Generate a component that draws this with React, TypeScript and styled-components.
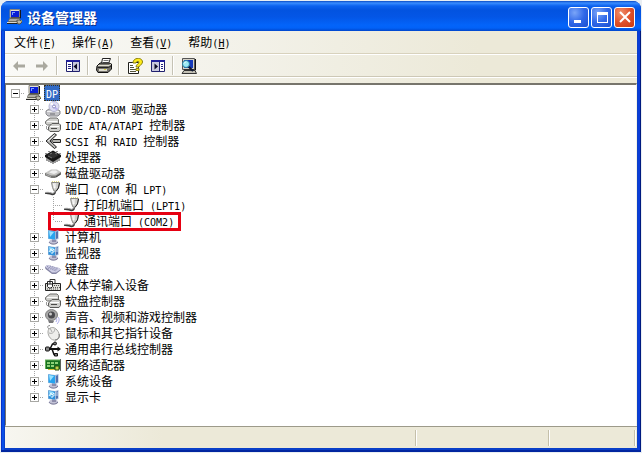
import React, { useState } from "react";
import styled, { createGlobalStyle, css } from "styled-components";

const GlobalStyle = createGlobalStyle`
  * { box-sizing: border-box; }
  html, body, #root { height: 100%; margin: 0; }
  body { background: #e9eef2; overflow: hidden; }
  button { font: inherit; color: inherit; border: 0; padding: 0; background: none; }
`;

const Page = styled.div`
  height: 100%;
  padding: 1px;
  font-family: "Noto Sans CJK SC", sans-serif;
  font-size: 12px;
  color: #000;
`;

const Window = styled.main`
  height: 100%;
  display: flex;
  flex-direction: column;
  padding: 0 4px 4px;
  border-radius: 8px 8px 0 0;
  background: linear-gradient(90deg, #0831c8 0 1px, #0a4fe8 1px 3px, #0a3fc8 3px calc(100% - 3px), #0a3cd8 calc(100% - 3px) calc(100% - 1px), #001a80 calc(100% - 1px));
  box-shadow: inset 0 -2px 0 #0126a0;
`;

const TitleBar = styled.header`
  height: 30px;
  flex: none;
  margin: 0 -4px;
  padding: 2px 6px 0;
  display: flex;
  align-items: center;
  gap: 4px;
  border-radius: 8px 8px 0 0;
  background: linear-gradient(180deg, #0a4bc4 0, #3a8dff 2px, #0c62ee 5px, #0353e0 9px, #0456e6 16px, #0364fa 24px, #0262f8 27px, #0046cc 30px);
`;

const Title = styled.h1`
  flex: 1;
  margin: 0;
  font-size: 14px;
  line-height: 20px;
  font-weight: 700;
  color: #fff;
  text-shadow: 1px 1px 0 #0a318c;
`;

const Captions = styled.div`
  display: flex;
  gap: 2px;
`;

const CaptionButton = styled.button<{ $close?: boolean }>`
  width: 21px;
  height: 21px;
  display: grid;
  place-items: center;
  border: 1px solid #fff;
  border-radius: 3px;
  background: ${(p) =>
    p.$close
      ? "radial-gradient(circle at 30% 25%, #f0906c, #e0512c 50%, #c8390f)"
      : "radial-gradient(circle at 30% 25%, #7aa5f8, #3068e8 50%, #1a4fd0)"};
`;

const bar = css`
  flex: none;
  display: flex;
  background: linear-gradient(90deg, #fafaf7 0, #f3f2ea 35%, #ece9d8 75%);
`;

const MenuBar = styled.nav`
  ${bar}
  height: 23px;
  padding-left: 1px;
  border-bottom: 1px solid #d8d2bd;
`;

const MenuItem = styled.button`
  padding: 0 8px;
  line-height: 22px;
`;

const ToolBar = styled.div`
  ${bar}
  height: 23px;
  padding-left: 2px;
  border-top: 1px solid #fff;
  border-bottom: 1px solid #cdc8b6;
`;

const ToolButton = styled.button`
  width: 23px;
  height: 22px;
  display: grid;
  place-items: center;
`;

const ToolDivider = styled.span`
  width: 2px;
  margin: 1px 3px;
  border-left: 1px solid #c5c2b4;
  border-right: 1px solid #fff;
`;

const Spacer = styled.div`
  ${bar}
  height: 6px;
  border-top: 1px solid #fff;
`;

const Tree = styled.div`
  flex: 1;
  min-height: 0;
  overflow: hidden;
  border: 1px solid #77756c;
  border-top-width: 2px;
  border-right-color: #f4f2e8;
  border-bottom-color: #fff;
  background: #fff;
`;

const Row = styled.div`
  position: relative;
  width: fit-content;
  height: 16px;
  display: flex;
  align-items: center;
`;

type Line = "none" | "full" | "up" | "pass";

const vertical = "repeating-linear-gradient(180deg, #a5a5a5 0 1px, transparent 1px 2px)";
const horizontal = "repeating-linear-gradient(90deg, transparent 0 1px, #a5a5a5 1px 2px)";

const Guide = styled.span<{ $line: Line }>`
  flex: none;
  width: 19px;
  height: 16px;
  display: grid;
  place-items: center;
  background-repeat: no-repeat;
  ${(p) =>
    p.$line === "none" &&
    css`background-image: ${horizontal}; background-size: 9px 1px; background-position: 10px 8px;`}
  ${(p) =>
    p.$line === "full" &&
    css`background-image: ${vertical}, ${horizontal}; background-size: 1px 16px, 9px 1px; background-position: 9px 0, 10px 8px;`}
  ${(p) =>
    p.$line === "up" &&
    css`background-image: ${vertical}, ${horizontal}; background-size: 1px 8px, 9px 1px; background-position: 9px 0, 10px 8px;`}
  ${(p) =>
    p.$line === "pass" &&
    css`background-image: ${vertical}; background-size: 1px 16px; background-position: 9px 0;`}
`;

const Indent = styled.span`
  width: 19px;
  flex: none;
`;

const Toggle = styled.button`
  width: 9px;
  height: 9px;
  margin-top: 1px;
  display: block;
  border: 1px solid #a8a8a4;
  background: #fff;
  svg { display: block; }
`;

const IconSlot = styled.span`
  width: 16px;
  height: 16px;
  margin: 0 2px 0 1px;
  flex: none;
  svg { display: block; }
`;

const ItemLabel = styled.span<{ $selected?: boolean }>`
  padding: 0 2px;
  height: 16px;
  line-height: 16px;
  white-space: pre;
  ${(p) =>
    p.$selected &&
    css`
      color: #fff;
      background: #316ac5;
      outline: 1px dotted #3a3420;
      outline-offset: -1px;
    `}
`;

const Latin = styled.span`
  font-family: "DejaVu Sans Mono", monospace;
  font-size: 10px;
  white-space: pre;
`;

const Marker = styled.span`
  position: absolute;
  inset: -1px -5px -2px 42px;
  border: 3px solid #e60012;
  pointer-events: none;
`;

const StatusBar = styled.footer`
  ${bar}
  height: 22px;
  padding: 3px 2px 2px 0;
  border-top: 1px solid #9d9a8a;
  background: linear-gradient(90deg, #f7f6f0 0, #ece9d8 25%);
`;

const StatusCell = styled.div<{ $width?: number }>`
  flex: ${(p) => (p.$width ? `0 0 ${p.$width}px` : "1")};
  border-right: 1px solid #c5c0aa;
  box-shadow: 1px 0 0 #fff;
`;

function Mixed({ text }: { text: string }) {
  const parts = text.split(/([\x20-\x7e]+)/).filter(Boolean);
  return (
    <>
      {parts.map((part, i) =>
        /^[\x20-\x7e]/.test(part) ? <Latin key={i}>{part}</Latin> : <React.Fragment key={i}>{part}</React.Fragment>
      )}
    </>
  );
}

const Svg = ({ children, size = 16 }: { children: React.ReactNode; size?: number }) => (
  <svg width={size} height={size} viewBox="0 0 16 16" fill="none" aria-hidden="true">
    {children}
  </svg>
);

const PcIcon = () => (
  <Svg>
    <path d="M3 .5h9.500v8H3z" fill="#e4e1d6" stroke="#8a887e" />
    <path d="M4 2h8v6H4z" fill="#0a1fd6" />
    <path d="M5 3h3v1H6v2H5z" fill="#7fa0ff" />
    <path d="M13.500 1v8H4" stroke="#15151a" />
    <path d="M2.500 9.500h10l1 3h-12z" fill="#d8d6cc" stroke="#6a685e" />
    <path d="M3 11h7" stroke="#85827a" />
    <path d="M0 14.500h11" stroke="#222" />
    <path d="M0 13.500h11" stroke="#d9d7cc" />
    <path d="M10 11h3l2 2-2 2h-2l-1-2z" fill="#bbb8aa" stroke="#55534a" />
    <path d="M14 12h1" stroke="#e7d44a" />
  </Svg>
);

const DiscIcon = () => (
  <Svg>
    <path d="M1 10l3-2h8l3 2v3l-2 2H3l-2-2z" fill="#c4c4c8" stroke="#88888d" />
    <path d="M2 10.500h12" stroke="#f1f1f3" />
    <circle cx="9" cy="5.500" r="5" fill="#dcdcf3" stroke="#b4b4cf" />
    <path d="M9 5.500L5 3l2-2z" fill="#fff" />
    <path d="M9 5.500l4 2-2 2z" fill="#b7b0ee" />
    <circle cx="9" cy="5.500" r="1.500" fill="#fff" stroke="#8586c0" />
    <path d="M5 13h5" stroke="#6b6b70" />
  </Svg>
);

const DriveStackIcon = () => (
  <Svg>
    <path d="M3 2.500l2-1.500h7l1.500 1.500v4L12 8H2.500L.5 6.500v-2z" fill="#cfcfcc" stroke="#6e6e6c" />
    <path d="M2 4.500h10.500" stroke="#fafafa" />
    <path d="M5 8.500L7 6.500h7l1.500 1.500v4.500L14 14.500H5L3.500 13v-3z" fill="#cfcfcc" stroke="#5a5a58" />
    <path d="M5 9.500h9" stroke="#fff" />
    <path d="M6 11.500h6" stroke="#4a4a48" />
    <path d="M1.500 9v3l2 1" stroke="#999" />
  </Svg>
);

const ScsiIcon = () => (
  <Svg>
    <path d="M9.500 .5L1 8l8.500 7.500 2-1.500L5 8l6.500-6z" fill="#b9b9b6" stroke="#222" />
    <path d="M3 8l6-6" stroke="#eee" />
    <path d="M8 6.500h7.500v3H8L6.500 8z" fill="#b4b4b0" stroke="#222" />
  </Svg>
);

const ChipIcon = () => (
  <Svg>
    <path d="M2 8v4M4 9v4M6 10v4M8 11v4M10 10v4M12 9v4M14 8v4" stroke="#3a3a3a" />
    <path d="M0 6l8-4.500L16 6v2l-8 5-8-5z" fill="#171717" />
    <path d="M2 6l6-3 6 3-6 3.500z" fill="#303030" />
    <path d="M5 5l2-1M10 4l2 1M3 7l4 2" stroke="#777" />
    <path d="M1 4v1M4 2v1M12 2v1M15 4v1" stroke="#222" />
  </Svg>
);

const DiskIcon = () => (
  <Svg>
    <path d="M0 8v2.500L6.500 13H10l6-3.500V7z" fill="#777774" />
    <path d="M0 8l6-3.500h6L16 7l-5.500 3.500H6z" fill="#c6c6c4" />
    <path d="M4 7.500l3-2h4l2 1.500-4 2z" fill="#efefef" />
    <path d="M11 12l4.500-3" stroke="#444" />
    <path d="M1 9.500l5 2" stroke="#aaa" />
  </Svg>
);

const PortIcon = () => (
  <Svg>
    <path d="M7 .5h8" stroke="#e3df83" strokeDasharray="1 1" />
    <path d="M6.500 1.500h8l-1 5L11 10H9L7.500 6.500z" fill="#cfcfcb" stroke="#8c8c88" />
    <path d="M8.500 2.500l1 5M10 2v5" stroke="#fff" />
    <path d="M14.500 2l-1 5L11 10.500" stroke="#222" />
    <path d="M10 10.500c0 2.500-1.500 3-3.500 2.500S3 11.500 0 12" stroke="#3c3c3c" strokeWidth="2" />
    <path d="M9.500 10c0 2.500-1.500 2.500-3 2S3 11 0 11.500" stroke="#aaa" />
  </Svg>
);

const ScreenIcon = ({ graph }: { graph?: boolean }) => (
  <Svg>
    <ellipse cx="8.500" cy="13" rx="4.500" ry="2.500" fill="#c2c2d6" />
    <path d="M4 13c1 2.500 7 3 9 0" stroke="#777795" />
    <path d="M7 10h4v3H7z" fill="#8d8dab" />
    <path d="M3 1l7 1 3.500-1v9L10 11 3 10z" fill="#9fb8d8" />
    <path d="M3.500 1.500L10 2.500v8l-6.500-1z" fill={graph ? "#2d91dc" : "#27a4ef"} />
    <path d="M4 2l5 1-4 5z" fill="#99e1ff" />
    <path d="M11 3l2-1v7l-2 1z" fill="#5372ae" />
    {graph && <path d="M4 7l2-3 1 2 2-2v3H7v2" stroke="#e8faff" />}
    {graph && <path d="M10 4h3M10 6h3" stroke="#c8dcf0" />}
  </Svg>
);

const KeyboardIcon = () => (
  <Svg>
    <path d="M0 6l2-2 12 3 2 2-5 4H7L.5 8z" fill="#8585a4" />
    <path d="M0 5.500L2 4l12 3 1.500 1.500L11 11.500H7z" fill="#d0d0e6" />
    <path d="M2 5.500l10 3.500M3 7l8 3M5 5l8 3" stroke="#8080a8" strokeDasharray="1 1" />
  </Svg>
);

const HidIcon = () => (
  <Svg>
    <path d="M.5 6.500h15v7H.5z" fill="#deded8" stroke="#222" />
    <path d="M9 8.500h6M8 10.500h7M2 12h12" stroke="#555" strokeDasharray="1 1" />
    <path d="M5 4V2.500h5V6" stroke="#333" />
    <path d="M2.500 4.500h5v5L6 11H4L2.500 9.500z" fill="#fff" stroke="#222" />
    <path d="M3 7h4M5 4v3" stroke="#222" />
  </Svg>
);

const SpeakerIcon = () => (
  <Svg>
    <ellipse cx="6.500" cy="6" rx="6" ry="5.500" fill="#a8a8a8" stroke="#808080" />
    <circle cx="6.500" cy="6" r="3.500" fill="#4a4a4e" />
    <circle cx="5.500" cy="5" r="1.500" fill="#cacaca" />
    <path d="M3 11l6 1-1 2H4z" fill="#77777a" />
    <path d="M11 9c1 1 1 2 0 4M13 8c2 2 1 5-1 7" stroke="#a8a8ec" />
  </Svg>
);

const MouseIcon = () => (
  <Svg>
    <path d="M4 4C2 2 2 1 5 .5" stroke="#888" />
    <path d="M3 7c0-5 6-6 9-2 3.500 4 3 9-1 10-5 1-8-4-8-8z" fill="#eeeeec" stroke="#a5a5a2" />
    <path d="M4 8c3 1 5 0 6-4M7 7L5 3" stroke="#aaa" />
    <path d="M14 9c1 3-1 6-4 6" stroke="#777" />
  </Svg>
);

const UsbIcon = () => (
  <Svg>
    <path d="M1 8h13" stroke="#111" strokeWidth="2" />
    <rect x=".5" y="6" width="4" height="4" rx="1" fill="#888" stroke="#111" />
    <path d="M12.500 5.500L16 8l-3.500 2.500z" fill="#111" />
    <path d="M5 8l2.500-5H10M7 8l2 5.500h2" stroke="#111" strokeWidth="1.500" />
    <circle cx="10" cy="2.500" r="1.500" fill="#777" stroke="#111" />
    <path d="M9.500 12.500h3v2.500h-3z" fill="#777" stroke="#111" />
  </Svg>
);

const NetIcon = () => (
  <Svg>
    <path d="M0 3h15v9H0z" fill="#167020" />
    <path d="M0 3h15M.5 3v9" stroke="#65ac57" />
    <path d="M2 5h3v2H2zM2 8h3v2H2zM6 5h3v2H6zM6 8h3v2H6zM10 5h3v2h-3z" fill="#8ed178" />
    <path d="M3 12.500h9" stroke="#d9bd32" />
    <path d="M10 9h4v4h-4z" fill="#bcd349" stroke="#284d14" />
    <path d="M15.500 2v12" stroke="#5c625b" />
  </Svg>
);

const Arrow = ({ flip }: { flip?: boolean }) => (
  <Svg>
    <path d={flip ? "M14 8L9 3v3.500H2v3h7V13z" : "M2 8l5-5v3.500h7v3H7V13z"} fill="#aaa99f" />
  </Svg>
);

const PaneIcon = ({ right }: { right?: boolean }) => (
  <Svg>
    <path d="M1.500 2.500h13v11h-13z" fill="#fff" stroke="#20206e" />
    <path d="M1 3h14" stroke="#20209a" strokeWidth="2" />
    <path d={right ? "M9.500 4v9" : "M7.500 4v9"} stroke="#20206e" />
    <path d={right ? "M2 4h7v9H2z" : "M8 4h6v9H8z"} fill="#c9c9dc" />
    <path d={right ? "M11 6.500h2M11 8.500h2M11 10.500h2" : "M3 6.500h3M3 8.500h3M3 10.500h3"} stroke="#222280" />
    <path d={right ? "M4.500 5.500v6L8 8.500z" : "M12 5.500v6L8.500 8.500z"} fill="#0a0a25" />
  </Svg>
);

const PrinterIcon = () => (
  <Svg>
    <path d="M5.500 5.500l1-5h8l-2 5z" fill="#fff" stroke="#222" />
    <path d="M7.500 2.500h5M7 4.500h5" stroke="#777" />
    <path d="M1 8l3-3h9l2.500 1v5L12 14.500H2L.5 12z" fill="#77756e" stroke="#111" />
    <path d="M2 7.500h11L15 6" stroke="#e1dfd3" />
    <path d="M1.500 9.500h11L15 8" stroke="#222" />
    <path d="M3 12h8" stroke="#dddbd0" strokeWidth="2" />
    <path d="M8 11.500h2" stroke="#dcd441" />
  </Svg>
);

const HelpIcon = () => (
  <Svg>
    <path d="M1.500 4.500h10v11h-10z" fill="#fff" stroke="#20201c" />
    <path d="M3 7.500h3M3 9.500h4M3 11.500h6M3 13.500h6" stroke="#54543c" />
    <path d="M6 5c0-6 9.500-6 9.500-1 0 3-3.500 3-3.500 5H9c0-3 3-3 3-5 0-1-3-1-3 1z" fill="#ffec18" stroke="#8a8010" />
    <path d="M9 10.500h3v2H9z" fill="#ffec18" stroke="#8a8010" />
  </Svg>
);

const ScanIcon = () => (
  <Svg>
    <path d="M1.500 .5h12v11h-12z" fill="#d4d2c8" stroke="#555" />
    <path d="M3 2h9v8H3z" fill="#1539ba" />
    <path d="M14.500 1v11H3" stroke="#111" />
    <path d="M1 15.500l2-3h11l1.500 3z" fill="#c3c1b5" stroke="#333" />
    <path d="M7 8l5 5" stroke="#101735" strokeWidth="2" />
    <circle cx="5" cy="6" r="3.500" fill="#9cebf5" stroke="#247da0" />
    <path d="M3 5.500l2-2" stroke="#fff" />
  </Svg>
);

type Device = { label: string; icon: React.ReactNode; children?: Device[]; marked?: boolean };

const devices: Device[] = [
  { label: "DVD/CD-ROM 驱动器", icon: <DiscIcon /> },
  { label: "IDE ATA/ATAPI 控制器", icon: <DriveStackIcon /> },
  { label: "SCSI 和 RAID 控制器", icon: <ScsiIcon /> },
  { label: "处理器", icon: <ChipIcon /> },
  { label: "磁盘驱动器", icon: <DiskIcon /> },
  {
    label: "端口 (COM 和 LPT)",
    icon: <PortIcon />,
    children: [
      { label: "打印机端口 (LPT1)", icon: <PortIcon /> },
      { label: "通讯端口 (COM2)", icon: <PortIcon />, marked: true },
    ],
  },
  { label: "计算机", icon: <ScreenIcon /> },
  { label: "监视器", icon: <ScreenIcon graph /> },
  { label: "键盘", icon: <KeyboardIcon /> },
  { label: "人体学输入设备", icon: <HidIcon /> },
  { label: "软盘控制器", icon: <DriveStackIcon /> },
  { label: "声音、视频和游戏控制器", icon: <SpeakerIcon /> },
  { label: "鼠标和其它指针设备", icon: <MouseIcon /> },
  { label: "通用串行总线控制器", icon: <UsbIcon /> },
  { label: "网络适配器", icon: <NetIcon /> },
  { label: "系统设备", icon: <ScreenIcon /> },
  { label: "显示卡", icon: <ScreenIcon graph /> },
];

const Expander = ({ open, label, onClick }: { open: boolean; label: string; onClick: () => void }) => (
  <Toggle type="button" aria-label={label} aria-expanded={open} onClick={onClick}>
    <svg width="7" height="7" viewBox="0 0 7 7" shapeRendering="crispEdges" aria-hidden="true">
      <path d={open ? "M1 3h5v1H1z" : "M1 3h2V1h1v2h2v1H4v2H3V4H1z"} fill="#000" />
    </svg>
  </Toggle>
);

const menus = [
  ["文件", "F"],
  ["操作", "A"],
  ["查看", "V"],
  ["帮助", "H"],
];

export default function App() {
  const [rootOpen, setRootOpen] = useState(true);
  const [open, setOpen] = useState<string[]>(["端口 (COM 和 LPT)"]);
  const toggle = (label: string) =>
    setOpen((list) => (list.includes(label) ? list.filter((l) => l !== label) : [...list, label]));

  return (
    <Page>
      <GlobalStyle />
      <Window>
        <TitleBar>
          <PcIcon />
          <Title>设备管理器</Title>
          <Captions>
            <CaptionButton aria-label="最小化">
              <Svg><path d="M3 11h7v3H3z" fill="#fff" /></Svg>
            </CaptionButton>
            <CaptionButton aria-label="最大化">
              <Svg><path d="M3 3h11v11H3zM4 6v7h9V6z" fill="#fff" fillRule="evenodd" /></Svg>
            </CaptionButton>
            <CaptionButton aria-label="关闭" $close>
              <Svg><path d="M3 3l10 10M13 3L3 13" stroke="#fff" strokeWidth="2" /></Svg>
            </CaptionButton>
          </Captions>
        </TitleBar>
        <MenuBar>
          {menus.map(([name, key]) => (
            <MenuItem key={key} type="button">
              {name}
              <Latin>(<u>{key}</u>)</Latin>
            </MenuItem>
          ))}
        </MenuBar>
        <ToolBar role="toolbar">
          <ToolButton aria-label="后退" disabled><Arrow /></ToolButton>
          <ToolButton aria-label="前进" disabled><Arrow flip /></ToolButton>
          <ToolDivider />
          <ToolButton aria-label="显示树"><PaneIcon /></ToolButton>
          <ToolDivider />
          <ToolButton aria-label="打印"><PrinterIcon /></ToolButton>
          <ToolDivider />
          <ToolButton aria-label="属性"><HelpIcon /></ToolButton>
          <ToolButton aria-label="操作窗格"><PaneIcon right /></ToolButton>
          <ToolDivider />
          <ToolButton aria-label="扫描硬件"><ScanIcon /></ToolButton>
        </ToolBar>
        <Spacer />
        <Tree role="tree">
          <Row role="treeitem" aria-expanded={rootOpen}>
            <Guide $line="none">
              <Expander open={rootOpen} label="DP" onClick={() => setRootOpen(!rootOpen)} />
            </Guide>
            <IconSlot><PcIcon /></IconSlot>
            <ItemLabel $selected><Mixed text="DP" /></ItemLabel>
          </Row>
          {rootOpen &&
            devices.map((device, i) => {
              const last = i === devices.length - 1;
              const expanded = open.includes(device.label);
              return (
                <React.Fragment key={device.label}>
                  <Row role="treeitem">
                    <Indent />
                    <Guide $line={last ? "up" : "full"}>
                      <Expander open={expanded} label={device.label} onClick={() => toggle(device.label)} />
                    </Guide>
                    <IconSlot>{device.icon}</IconSlot>
                    <ItemLabel><Mixed text={device.label} /></ItemLabel>
                  </Row>
                  {expanded &&
                    device.children?.map((child, j) => (
                      <Row role="treeitem" key={child.label}>
                        <Indent />
                        <Guide $line="pass" />
                        <Guide $line={j === device.children!.length - 1 ? "up" : "full"} />
                        <IconSlot>{child.icon}</IconSlot>
                        <ItemLabel><Mixed text={child.label} /></ItemLabel>
                        {child.marked && <Marker />}
                      </Row>
                    ))}
                </React.Fragment>
              );
            })}
        </Tree>
        <StatusBar>
          <StatusCell />
          <StatusCell $width={133} />
          <StatusCell $width={86} />
        </StatusBar>
      </Window>
    </Page>
  );
}
